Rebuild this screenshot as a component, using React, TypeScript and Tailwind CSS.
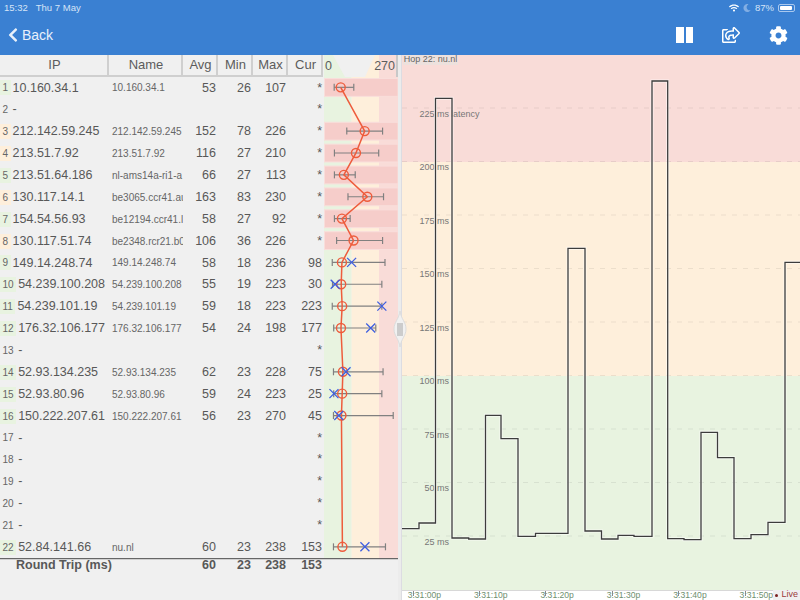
import { FaChevronLeft, FaCog, FaMoon, FaRegShareSquare, FaWifi } from "react-icons/fa";

type Hop = {
  hop: number;
  ip: string;
  name?: string;
  avg?: number;
  min?: number;
  max?: number;
  cur?: number;
};

const hops: Hop[] = [
  { hop: 1, ip: "10.160.34.1", name: "10.160.34.1", avg: 53, min: 26, max: 107 },
  { hop: 2, ip: "-" },
  { hop: 3, ip: "212.142.59.245", name: "212.142.59.245", avg: 152, min: 78, max: 226 },
  { hop: 4, ip: "213.51.7.92", name: "213.51.7.92", avg: 116, min: 27, max: 210 },
  { hop: 5, ip: "213.51.64.186", name: "nl-ams14a-ri1-a", avg: 66, min: 27, max: 113 },
  { hop: 6, ip: "130.117.14.1", name: "be3065.ccr41.au", avg: 163, min: 83, max: 230 },
  { hop: 7, ip: "154.54.56.93", name: "be12194.ccr41.l", avg: 58, min: 27, max: 92 },
  { hop: 8, ip: "130.117.51.74", name: "be2348.rcr21.b0", avg: 106, min: 36, max: 226 },
  { hop: 9, ip: "149.14.248.74", name: "149.14.248.74", avg: 58, min: 18, max: 236, cur: 98 },
  { hop: 10, ip: "54.239.100.208", name: "54.239.100.208", avg: 55, min: 19, max: 223, cur: 30 },
  { hop: 11, ip: "54.239.101.19", name: "54.239.101.19", avg: 59, min: 18, max: 223, cur: 223 },
  { hop: 12, ip: "176.32.106.177", name: "176.32.106.177", avg: 54, min: 24, max: 198, cur: 177 },
  { hop: 13, ip: "-" },
  { hop: 14, ip: "52.93.134.235", name: "52.93.134.235", avg: 62, min: 23, max: 228, cur: 75 },
  { hop: 15, ip: "52.93.80.96", name: "52.93.80.96", avg: 59, min: 24, max: 223, cur: 25 },
  { hop: 16, ip: "150.222.207.61", name: "150.222.207.61", avg: 56, min: 23, max: 270, cur: 45 },
  { hop: 17, ip: "-" },
  { hop: 18, ip: "-" },
  { hop: 19, ip: "-" },
  { hop: 20, ip: "-" },
  { hop: 21, ip: "-" },
  { hop: 22, ip: "52.84.141.66", name: "nu.nl", avg: 60, min: 23, max: 238, cur: 153 },
];

const columns = "grid grid-cols-[109px_74px_35px_35px_35px_35px_75px]";
const rowHeight = 21.88;

const xOf = (ms: number) => 327.9 + ms * 0.2419;
const yOf = (hop: number) => 76.9 + (hop - 0.5) * rowHeight - 0.5;

// step line of the hop's latency, in page pixels
const steps: [number, number][] = [
  [402, 528.7], [419, 523], [435.5, 98.3], [452, 538], [468.7, 539], [485.5, 415.3],
  [501, 438.7], [518, 536.3], [535.5, 533.3], [568, 248.3], [585, 531], [601.5, 539],
  [618, 535.3], [634, 536.3], [652, 81], [667.7, 538.7], [684, 539.7], [701, 432.3],
  [717.5, 457.7], [734, 538.7], [751, 534.7], [768, 522.3], [785, 262.3],
];

const stepPath = () => {
  let d = `M${steps[0][0]} ${steps[0][1]}`;
  for (let i = 1; i < steps.length; i++) {
    d += ` H${steps[i][0]} V${steps[i][1]}`;
  }
  return d + " H800";
};

const yLabels = [225, 200, 175, 150, 125, 100, 75, 50, 25];
const times = ["3:31:00p", "3:31:10p", "3:31:20p", "3:31:30p", "3:31:40p", "3:31:50p"];

const StatusBar = () => (
  <div className="flex h-[15px] items-center justify-between pt-[1px] pl-[4px] pr-[5px] text-[9.5px] text-[#d5e4f7]">
    <div className="flex gap-[8px]">
      <span>15:32</span>
      <span>Thu 7 May</span>
    </div>
    <div className="flex items-center gap-[4px]">
      <FaWifi className="text-white" size={10} />
      <FaMoon className="text-[#82aee4]" size={8} />
      <span>87%</span>
      <div className="flex h-[8px] w-[17px] items-center rounded-[2px] border border-[#a9c8ee] p-[1px]">
        <div className="h-full w-[12px] rounded-[1px] bg-white" />
      </div>
    </div>
  </div>
);

const NavBar = () => (
  <div className="flex h-[40px] items-center justify-between pl-[5px] pr-[12px] text-white">
    <div className="flex items-center text-[14px] text-[#e8f0fb]">
      <FaChevronLeft size={16} />
      <span className="ml-[1px]">Back</span>
    </div>
    <div className="flex items-center">
      <div className="flex gap-[2px]">
        <div className="h-[16px] w-[8px] bg-white" />
        <div className="h-[16px] w-[7px] bg-white" />
      </div>
      <FaRegShareSquare className="ml-[29px]" size={18} />
      <FaCog className="ml-[29px]" size={19} />
    </div>
  </div>
);

const HeaderCell = ({ label }: { label: string }) => (
  <div className="flex items-center justify-center border-r-2 border-b-2 border-[#cfcfcf] pl-[2px] text-[13px] text-[#5c5c5c]">
    {label}
  </div>
);

const HopRow = ({ item }: { item: Hop }) => {
  const chip =
    item.avg === undefined ? "" : item.avg >= 100 ? "bg-[#feefdb]" : "bg-[#e8f3e0]";
  return (
    <div className={`${columns} relative h-[21.88px] items-center text-[12.5px] text-[#585858]`}>
      <div className="flex items-center whitespace-nowrap">
        <span className={`${chip} flex h-[15px] items-center px-[2.5px] text-[10px] text-[#666]`}>
          {item.hop}
        </span>
        <span className="ml-[2px]">{item.ip}</span>
      </div>
      <div className="overflow-hidden pl-[3px] text-[10px] whitespace-nowrap text-[#666]">
        {item.name}
      </div>
      <div className="pr-[2px] text-right">{item.avg}</div>
      <div className="pr-[2px] text-right">{item.min}</div>
      <div className="pr-[2px] text-right">{item.max}</div>
      <div className="pr-[1px] text-right">{item.cur ?? "*"}</div>
      <div />
    </div>
  );
};

const RangeChart = () => {
  const live = hops.filter((h) => h.avg !== undefined);
  const line = live.map((h) => `${xOf(h.avg!)},${yOf(h.hop)}`).join(" ");
  return (
    <svg
      className="absolute top-0 left-[324px] h-[503px] w-[74px]"
      viewBox="324 55 74 503"
    >
      <rect x="324" y="55" width="27.6" height="503" fill="#e8f3e0" />
      <rect x="351.6" y="55" width="27.4" height="503" fill="#feefdb" />
      <rect x="379" y="55" width="19" height="503" fill="#f9dcd8" />
      <polygon points="333,55 345,77 365,77 375,55" fill="#f0f0f0" />
      {live
        .filter((h) => h.cur === undefined)
        .map((h) => (
          <rect
            key={h.hop}
            x="324.5"
            y={yOf(h.hop) - 8.8}
            width="73.5"
            height="17.8"
            fill="#f6cdca"
            stroke="#f9dedb"
          />
        ))}
      {live.map((h) => (
        <g key={h.hop} stroke="#808080" strokeWidth="1.2" fill="none">
          <path d={`M${xOf(h.min!)} ${yOf(h.hop)} H${xOf(h.max!)}`} />
          <path d={`M${xOf(h.min!)} ${yOf(h.hop) - 3.5} v7`} />
          <path d={`M${xOf(h.max!)} ${yOf(h.hop) - 3.5} v7`} />
        </g>
      ))}
      <polyline points={line} fill="none" stroke="#ee5c3c" strokeWidth="1.5" />
      {live.map((h) => (
        <circle
          key={h.hop}
          cx={xOf(h.avg!)}
          cy={yOf(h.hop)}
          r="4.5"
          fill="none"
          stroke="#ee5c3c"
          strokeWidth="1.4"
        />
      ))}
      {live
        .filter((h) => h.cur !== undefined)
        .map((h) => (
          <path
            key={h.hop}
            d={`M${xOf(h.cur!) - 4.5} ${yOf(h.hop) - 4.5} l9 9 M${xOf(h.cur!) + 4.5} ${yOf(h.hop) - 4.5} l-9 9`}
            stroke="#3f5fe0"
            strokeWidth="1.3"
            fill="none"
          />
        ))}
    </svg>
  );
};

const HopTable = () => (
  <div className="relative w-[398px] bg-[#f0f0f0]">
    <RangeChart />
    <div className={`${columns} relative h-[22px]`}>
      <HeaderCell label="IP" />
      <HeaderCell label="Name" />
      <HeaderCell label="Avg" />
      <HeaderCell label="Min" />
      <HeaderCell label="Max" />
      <HeaderCell label="Cur" />
      <div className="flex items-center justify-between border-r-2 border-[#c8c8c8] pr-[1px] pl-[2px] text-[12.5px] text-[#5c5c5c]">
        <span>0</span>
        <span>270</span>
      </div>
    </div>
    {hops.map((item) => (
      <HopRow key={item.hop} item={item} />
    ))}
    <div
      className={`${columns} relative h-[13px] items-center border-t border-[#666] text-[12.5px] leading-none font-bold text-[#585858] shadow-[inset_0_1px_0_#cfcfcf]`}
    >
      <div className="pl-[16px] whitespace-nowrap">Round Trip (ms)</div>
      <div />
      <div className="pr-[2px] text-right">60</div>
      <div className="pr-[2px] text-right">23</div>
      <div className="pr-[2px] text-right">238</div>
      <div className="pr-[1px] text-right">153</div>
      <div />
    </div>
  </div>
);

const SplitHandle = () => (
  <div className="relative z-10 w-[4px] bg-[#ececec]">
    <svg className="absolute top-[256px] left-[-5px] h-[36px] w-[14px]" viewBox="0 0 14 36">
      <path
        d="M7 0 C8 8 13 11 13 18 C13 25 8 28 7 36 C6 28 1 25 1 18 C1 11 6 8 7 0 Z"
        fill="#f1f1f1"
        stroke="#dcdcdc"
      />
      <rect x="4" y="12" width="6" height="13" fill="#cccccc" />
    </svg>
  </div>
);

const LatencyChart = () => (
  <div className="relative flex flex-1 flex-col border-l border-[#dcdce2] text-[#707070]">
    <div className="h-[107px] bg-[#f9dcd8]" />
    <div className="h-[214px] bg-[#feefdb]" />
    <div className="h-[214px] bg-[#e8f3e0]" />
    <div className="flex h-[10px] border-t border-[#d8d8d8] bg-white text-[8.6px] leading-[9px] text-[#6f8f6f]">
      {times.map((t) => (
        <div key={t} className="relative w-[66.4px] flex-none pl-[6px] whitespace-nowrap">
          {t}
          <div className="absolute top-0 left-[11px] h-[5px] w-px bg-[#8a8a8a]" />
        </div>
      ))}
    </div>
    <svg className="absolute top-0 left-0 h-[535px] w-[398px]" viewBox="402 55 398 535">
      {yLabels.map((ms, i) => {
        const y = 108 + i * 53.5;
        return (
          <g key={ms}>
            <path d={`M402 ${y} H800`} stroke="#000" strokeOpacity="0.07" strokeDasharray="5 6" />
            <text
              x="449"
              y={y + 8.5}
              textAnchor="end"
              fontSize="9"
              fill="#777"
              fontFamily="Liberation Sans"
            >
              {ms} ms
            </text>
          </g>
        );
      })}
      <text x="451" y="116.5" fontSize="9" fill="#777" fontFamily="Liberation Sans">
        latency
      </text>
      <path d={stepPath()} fill="none" stroke="#ffffff" strokeOpacity="0.6" strokeWidth="3" />
      <path d={stepPath()} fill="none" stroke="#3c3c3c" strokeWidth="1.3" />
    </svg>
    <div className="absolute top-0 left-[1px] h-[10px] bg-[#e8e2e0]/70 pr-[1px] pl-[1px] text-[9px] leading-[9px] text-[#666]">
      Hop 22: nu.nl
    </div>
    <div className="absolute right-0 bottom-0 flex h-[10px] items-center gap-[3px] bg-[#f0f0f0] pr-[2px] pl-[2px] text-[9px] text-[#9a3b3b]">
      <div className="h-[3px] w-[3px] rounded-full bg-[#7a2222]" />
      <span>Live</span>
    </div>
  </div>
);

export default function App() {
  return (
    <div className="flex h-[600px] w-[800px] flex-col overflow-hidden bg-[#f0f0f0] font-['Liberation_Sans',sans-serif]">
      <div className="h-[55px] flex-none bg-[#3a80d2]">
        <StatusBar />
        <NavBar />
      </div>
      <div className="flex flex-1">
        <HopTable />
        <SplitHandle />
        <LatencyChart />
      </div>
    </div>
  );
}
